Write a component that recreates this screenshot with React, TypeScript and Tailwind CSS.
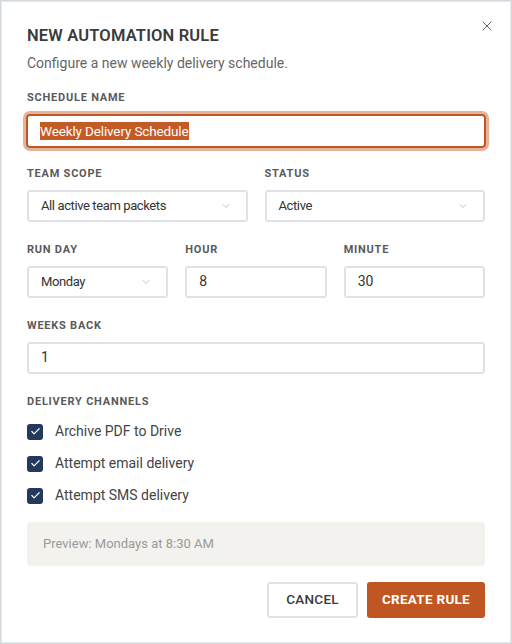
import { Check, ChevronDown, X } from "lucide-react";

const font = { fontFamily: '"Roboto", "Liberation Sans", sans-serif' };

const Label = ({ children }: { children: React.ReactNode }) => (
  <div className="text-[11px] font-bold tracking-[0.07em] text-[#5a5a5a] leading-none mb-[11px]">
    {children}
  </div>
);

const SelectBox = ({ value }: { value: string }) => (
  <div className="h-8 border-2 border-[#dfe2e7] rounded-[3px] flex items-center justify-between pl-[12px] pr-[14px] text-[13px] tracking-[-0.03em] text-[#333]">
    <span>{value}</span>
    <ChevronDown className="w-[12px] h-[12px] text-[#a0a0a0]" strokeWidth={1.25} />
  </div>
);

const TextBox = ({ value }: { value: string }) => (
  <div className="h-8 border-2 border-[#dfe2e7] rounded-[3px] flex items-center pl-[12px] text-[14px] text-[#333]">
    {value}
  </div>
);

const Channel = ({ label }: { label: string }) => (
  <div className="flex items-center gap-[12px] h-4">
    <span className="w-4 h-4 rounded-[3px] bg-[#22385c] flex items-center justify-center">
      <Check className="w-[11px] h-[11px] text-white" strokeWidth={2.5} />
    </span>
    <span className="text-[14px] text-[#444]">{label}</span>
  </div>
);

export default function App() {
  return (
    <div className="w-[512px] h-[644px] bg-[#d4d8df] p-px" style={font}>
      <div className="w-full h-full bg-white border border-[#e6e8ec] relative px-[25px] pt-[26px]">
        <button className="absolute right-[15px] top-[16px] text-[#666]">
          <X className="w-4 h-4" strokeWidth={1.5} />
        </button>
        <h1 className="text-[16.5px] font-semibold tracking-[0.01em] text-[#3b3b3b] leading-none">
          NEW AUTOMATION RULE
        </h1>
        <p className="text-[14px] text-[#666] mt-[11px] leading-none">
          Configure a new weekly delivery schedule.
        </p>

        <div className="mt-[22px]">
          <Label>SCHEDULE NAME</Label>
          <div className="h-[34px] -mx-[1px] border-2 border-[#c05621] rounded-[4px] shadow-[0_0_0_3px_rgba(192,86,33,0.45)] flex items-center pl-[12px] text-[13.5px] tracking-[-0.01em]">
            <span className="bg-[#c45a26] text-white leading-[18px]">Weekly Delivery Schedule</span>
          </div>
        </div>

        <div className="grid grid-cols-2 gap-[17px] mt-[20px]">
          <div>
            <Label>TEAM SCOPE</Label>
            <SelectBox value="All active team packets" />
          </div>
          <div>
            <Label>STATUS</Label>
            <SelectBox value="Active" />
          </div>
        </div>

        <div className="grid grid-cols-3 gap-[17px] mt-[22px]">
          <div>
            <Label>RUN DAY</Label>
            <SelectBox value="Monday" />
          </div>
          <div>
            <Label>HOUR</Label>
            <TextBox value="8" />
          </div>
          <div>
            <Label>MINUTE</Label>
            <TextBox value="30" />
          </div>
        </div>

        <div className="mt-[22px]">
          <Label>WEEKS BACK</Label>
          <TextBox value="1" />
        </div>

        <div className="mt-[22px]">
          <Label>DELIVERY CHANNELS</Label>
          <div className="flex flex-col gap-4 mt-[17px]">
            <Channel label="Archive PDF to Drive" />
            <Channel label="Attempt email delivery" />
            <Channel label="Attempt SMS delivery" />
          </div>
        </div>

        <div className="mt-[18px] h-[44px] bg-[#f3f2ef] rounded-[3px] flex items-center pl-[16px] text-[13px] text-[#9a9a9a]">
          Preview: Mondays at 8:30 AM
        </div>

        <div className="flex justify-end gap-[9px] mt-[16px]">
          <button className="h-[36px] px-[17px] border-2 border-[#dfe2e7] rounded-[3px] text-[13.5px] font-medium tracking-[0.02em] text-[#3b3b3b]">
            CANCEL
          </button>
          <button className="h-[36px] px-[15px] bg-[#c05621] rounded-[3px] text-[13.5px] font-bold tracking-[0.02em] text-white">
            CREATE RULE
          </button>
        </div>
      </div>
    </div>
  );
}
